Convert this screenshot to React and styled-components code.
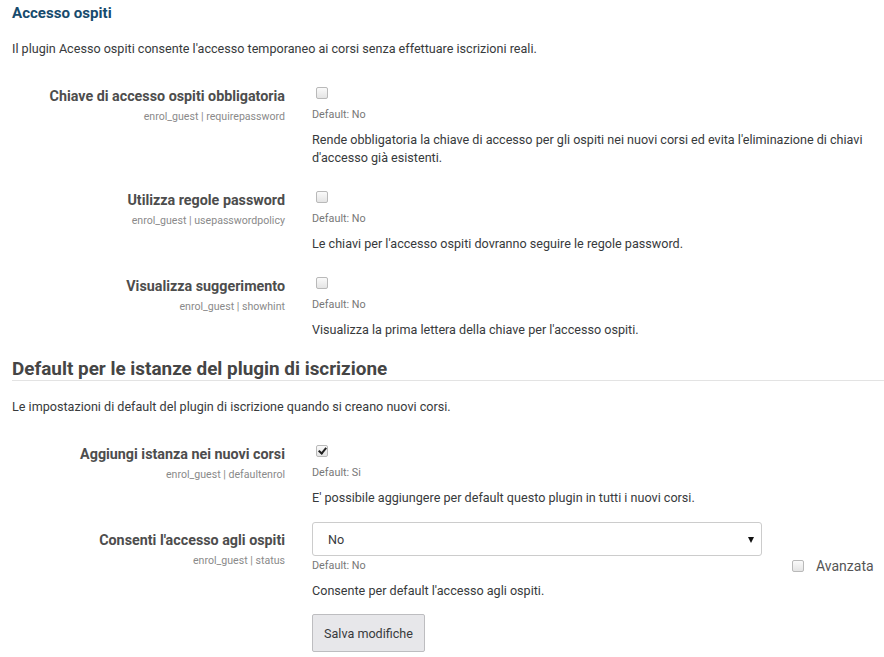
import React from "react"
import styled, { createGlobalStyle } from "styled-components"

const Global = createGlobalStyle`
    body {
        margin: 0;
        background: #ffffff;
        font-family: Roboto, "Liberation Sans", Arial, sans-serif;
        color: #373a3c;
    }
`

const settings1 = [
    {
        label: "Chiave di accesso ospiti obbligatoria",
        name: "enrol_guest | requirepassword",
        def: "Default: No",
        desc: "Rende obbligatoria la chiave di accesso per gli ospiti nei nuovi corsi ed evita l'eliminazione di chiavi d'accesso già esistenti.",
    },
    {
        label: "Utilizza regole password",
        name: "enrol_guest | usepasswordpolicy",
        def: "Default: No",
        desc: "Le chiavi per l'accesso ospiti dovranno seguire le regole password.",
    },
    {
        label: "Visualizza suggerimento",
        name: "enrol_guest | showhint",
        def: "Default: No",
        desc: "Visualizza la prima lettera della chiave per l'accesso ospiti.",
    },
]

export default function App() {
    return (
        <Page>
            <Global />
            <Title>Accesso ospiti</Title>
            <Intro>Il plugin Acesso ospiti consente l'accesso temporaneo ai corsi senza effettuare iscrizioni reali.</Intro>

            {settings1.map((s) => (
                <Row key={s.name}>
                    <LabelCol>
                        <Label>{s.label}</Label>
                        <SettingName>{s.name}</SettingName>
                    </LabelCol>
                    <ValueCol $check>
                        <CheckLine><Check /></CheckLine>
                        <DefaultText>{s.def}</DefaultText>
                        <Desc>{s.desc}</Desc>
                    </ValueCol>
                </Row>
            ))}

            <Heading>Default per le istanze del plugin di iscrizione</Heading>
            <Intro>Le impostazioni di default del plugin di iscrizione quando si creano nuovi corsi.</Intro>

            <Row>
                <LabelCol>
                    <Label>Aggiungi istanza nei nuovi corsi</Label>
                    <SettingName>enrol_guest | defaultenrol</SettingName>
                </LabelCol>
                <ValueCol $check>
                    <CheckLine><Check $checked /></CheckLine>
                    <DefaultText>Default: Si</DefaultText>
                    <Desc>E' possibile aggiungere per default questo plugin in tutti i nuovi corsi.</Desc>
                </ValueCol>
            </Row>

            <Row>
                <LabelCol>
                    <Label>Consenti l'accesso agli ospiti</Label>
                    <SettingName>enrol_guest | status</SettingName>
                </LabelCol>
                <ValueCol>
                    <SelectGrid>
                        <div>
                            <SelectBox>
                                <select defaultValue="No">
                                    <option>No</option>
                                    <option>Si</option>
                                </select>
                            </SelectBox>
                            <DefaultText $near>Default: No</DefaultText>
                        </div>
                        <Advanced>
                            <Check />
                            <span>Avanzata</span>
                        </Advanced>
                    </SelectGrid>
                    <Desc $near>Consente per default l'accesso agli ospiti.</Desc>
                    <SaveButton>Salva modifiche</SaveButton>
                </ValueCol>
            </Row>
        </Page>
    )
}

const Page = styled.div`
    width: 884px;
    height: 657px;
    box-sizing: border-box;
    padding: 3px 0 0 12px;
    overflow: hidden;
`

const Title = styled.h3`
    margin: 0;
    font-size: 15.1px;
    line-height: 20px;
    font-weight: 700;
    color: #174b6d;
`

const Intro = styled.p`
    margin: 17px 0 20px 0;
    font-size: 12.6px;
    line-height: 18px;
    color: #373a3c;
`

const Heading = styled.h2`
    margin: 18px 0 0 0;
    padding-bottom: 0;
    font-size: 18.9px;
    line-height: 23px;
    font-weight: 700;
    color: #454545;
    border-bottom: 1px solid #e3e3e3;
`

const Row = styled.div`
    display: grid;
    grid-template-columns: 273px 1fr;
    column-gap: 27px;
    margin-top: 15px;
`

const LabelCol = styled.div`
    text-align: right;
    padding-top: 8px;
`

const Label = styled.div`
    font-size: 14.3px;
    line-height: 20px;
    font-weight: 700;
    color: #4d4d4d;
`

const SettingName = styled.div`
    margin-top: 4px;
    font-size: 10.6px;
    line-height: 14px;
    color: #8a8a8a;
`

const ValueCol = styled.div`
    padding-top: ${(p) => (p.$check ? "5px" : "0")};
    padding-right: 14px;
`

const CheckLine = styled.div`
    height: 20px;
    display: flex;
    align-items: center;
    padding-left: 4px;
`

const Check = styled.span`
    display: inline-block;
    position: relative;
    width: 10px;
    height: 10px;
    border: 1px solid #b9b9b9;
    border-radius: 2px;
    background: linear-gradient(#fafafa, #e4e4e4);
    ${(p) =>
        p.$checked &&
        `
        &::after {
            content: "";
            position: absolute;
            left: 3px;
            top: 0px;
            width: 3px;
            height: 6px;
            border: solid #222;
            border-width: 0 2px 2px 0;
            transform: rotate(40deg);
        }
    `}
`

const DefaultText = styled.div`
    margin-top: ${(p) => (p.$near ? "3px" : "5px")};
    font-size: 10.8px;
    line-height: 14px;
    color: #777777;
`

const Desc = styled.p`
    margin: ${(p) => (p.$near ? "8px" : "9px")} 0 0 0;
    font-size: 12.6px;
    line-height: 18px;
    color: #373a3c;
`

const SelectGrid = styled.div`
    display: grid;
    grid-template-columns: 450px 1fr;
`

const SelectBox = styled.div`
    position: relative;
    height: 34px;
    select {
        appearance: none;
        width: 100%;
        height: 34px;
        box-sizing: border-box;
        border: 1px solid #cccccc;
        border-radius: 3px;
        background: #ffffff;
        padding: 0 15px;
        font-family: Roboto, "Liberation Sans", Arial, sans-serif;
        font-size: 12.6px;
        color: #373a3c;
    }
    &::after {
        content: "";
        position: absolute;
        right: 8px;
        top: 15px;
        border-left: 3px solid transparent;
        border-right: 3px solid transparent;
        border-top: 6px solid #111;
        pointer-events: none;
    }
`

const Advanced = styled.div`
    display: flex;
    align-items: center;
    gap: 12px;
    margin-top: 36px;
    padding-left: 30px;
    height: 16px;
    font-size: 14px;
    color: #555555;
`

const SaveButton = styled.button`
    margin-top: 14px;
    width: 113px;
    height: 38px;
    border: 1px solid #bdbdc0;
    border-radius: 2px;
    background: #e7e7ea;
    font-family: Roboto, "Liberation Sans", Arial, sans-serif;
    font-size: 12.6px;
    color: #373a3c;
`
